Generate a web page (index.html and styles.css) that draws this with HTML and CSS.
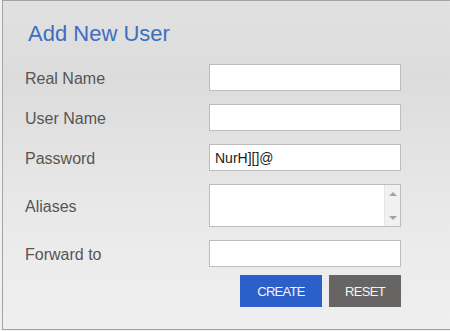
FILE: index.html
```html
<!DOCTYPE html>
<html>
<head>
<meta charset="utf-8">
<link rel="stylesheet" href="styles.css">
</head>
<body>
<div class="panel">
  <h1 class="title">Add New User</h1>
  <form class="form">
    <label class="label">Real Name</label>
    <input class="field" type="text">
    <label class="label">User Name</label>
    <input class="field" type="text">
    <label class="label">Password</label>
    <input class="field" type="text" value="NurH][]@">
    <label class="label">Aliases</label>
    <div class="area">
      <textarea class="area-input"></textarea>
      <div class="scrollbar">
        <span class="arrow up"></span>
        <span class="arrow down"></span>
      </div>
    </div>
    <label class="label">Forward to</label>
    <input class="field" type="text">
  </form>
  <div class="actions">
    <button class="btn btn-create" type="button">CREATE</button>
    <button class="btn btn-reset" type="button">RESET</button>
  </div>
</div>
</body>
</html>
```
FILE: styles.css
```css
html, body {
  margin: 0;
  padding: 0;
  background: #f0f0f0;
  font-family: "Liberation Sans", Arial, sans-serif;
}
.panel {
  margin-left: 2px;
  height: 328px;
  border: 1px solid #a4a4a4;
  border-right: none;
  padding-left: 22px;
  background: linear-gradient(#e1e1e1 0px, #dcdcdc 80px, #e3e3e3 150px, #ebebeb 240px, #efefef 330px);
}
.title {
  margin: 20px 0 0 3px;
  font-size: 22px;
  line-height: 26px;
  font-weight: normal;
  color: #3d6ebf;
}
.form {
  margin-top: 17px;
  display: grid;
  grid-template-columns: 184px 192px;
  row-gap: 13px;
  align-items: center;
}
.label {
  font-size: 16px;
  padding-top: 2px;
  color: #575553;
}
.field {
  box-sizing: border-box;
  width: 192px;
  height: 27px;
  margin: 0;
  border: 1px solid #bdbdbd;
  background: #fff;
  padding: 0 5px;
  font-family: "Liberation Sans", Arial, sans-serif;
  font-size: 14px;
  color: #222;
  outline: none;
}
.area {
  box-sizing: border-box;
  width: 192px;
  height: 43px;
  border: 1px solid #bdbdbd;
  background: #fff;
  display: flex;
}
.area-input {
  flex: 1;
  border: none;
  margin: 0;
  padding: 0;
  resize: none;
  outline: none;
  background: #fff;
}
.scrollbar {
  width: 15px;
  border-left: 1px solid #e6e6e6;
  background: #f1f1f1;
  display: flex;
  flex-direction: column;
  justify-content: space-between;
  align-items: center;
  padding: 7px 0 6px;
}
.arrow {
  width: 0;
  height: 0;
  border-left: 4px solid transparent;
  border-right: 4px solid transparent;
}
.arrow.up {
  border-bottom: 4px solid #a3a3a3;
}
.arrow.down {
  border-top: 4px solid #a3a3a3;
}
.actions {
  margin-top: 8px;
  width: 376px;
  display: flex;
  justify-content: flex-end;
  gap: 7px;
}
.btn {
  height: 32px;
  border: none;
  margin: 0;
  padding: 0;
  color: #f4f4f4;
  font-family: "Liberation Sans", Arial, sans-serif;
  font-size: 13px;
  letter-spacing: -0.7px;
}
.btn-create {
  width: 82px;
  background: #2b60cb;
}
.btn-reset {
  width: 72px;
  background: #676563;
}
```
